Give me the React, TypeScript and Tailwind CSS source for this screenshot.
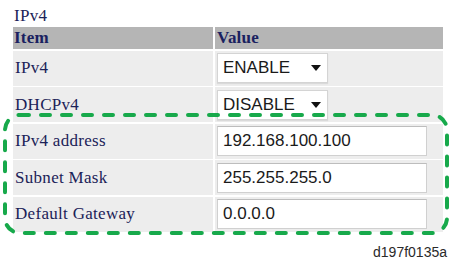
import React from "react";

function Label({ children }: { children: React.ReactNode }) {
  return (
    <div className="h-[35px] bg-[#ededed] flex items-center pl-[2px] font-['Liberation_Serif','Times_New_Roman',serif] text-[17px] tracking-[0.3px] text-[#1b2258]">
      {children}
    </div>
  );
}

function Select({ value }: { value: string }) {
  return (
    <div className="h-[35px] bg-[#ededed] flex items-center pl-[2px]">
      <div className="w-[111px] h-[30px] bg-white border border-[#d4d4d4] shadow-[0_1px_1px_rgba(0,0,0,0.08)] flex items-center justify-between pl-[5px] pr-[6px] font-['Liberation_Sans',Arial,sans-serif] text-[17px] text-[#1a1a1a]">
        <span>{value}</span>
        <svg width="10" height="6" viewBox="0 0 10 6">
          <path d="M0 0 L10 0 L5 6 Z" fill="#111" />
        </svg>
      </div>
    </div>
  );
}

function Input({ value }: { value: string }) {
  return (
    <div className="h-[35px] bg-[#ededed] flex items-center pl-[2px]">
      <div className="w-[210px] h-[30px] bg-white border border-[#d0d0d0] border-t-[#bdbdbd] flex items-center pl-[5px] font-['Liberation_Sans',Arial,sans-serif] text-[17px] text-[#1a1a1a]">
        {value}
      </div>
    </div>
  );
}

export default function App() {
  return (
    <div className="relative w-[451px] h-[265px] bg-white overflow-hidden">
      <div className="h-[27px] pl-[14px] pt-[3px] font-['Liberation_Serif','Times_New_Roman',serif] text-[17px] tracking-[0.3px] text-[#1b2258]">
        IPv4
      </div>
      <div className="ml-[13px] grid grid-cols-[200px_228px] gap-x-[2px] gap-y-[1.5px]">
        <div className="h-[22px] bg-[#b5b5b5] flex items-center pl-[1px] font-['Liberation_Serif','Times_New_Roman',serif] text-[17px] font-bold tracking-[0.2px] text-[#1a2160]">
          Item
        </div>
        <div className="h-[22px] bg-[#b5b5b5] flex items-center pl-[2px] font-['Liberation_Serif','Times_New_Roman',serif] text-[17px] font-bold tracking-[0.2px] text-[#1a2160]">
          Value
        </div>
        <Label>IPv4</Label>
        <Select value="ENABLE" />
        <Label>DHCPv4</Label>
        <Select value="DISABLE" />
        <Label>IPv4 address</Label>
        <Input value="192.168.100.100" />
        <Label>Subnet Mask</Label>
        <Input value="255.255.255.0" />
        <Label>Default Gateway</Label>
        <Input value="0.0.0.0" />
      </div>
      <svg
        className="absolute left-0 top-0 pointer-events-none"
        width="451"
        height="265"
        viewBox="0 0 451 265"
      >
        <rect
          x="5"
          y="115"
          width="442"
          height="118"
          rx="15"
          ry="15"
          fill="none"
          stroke="#17a94b"
          strokeWidth="4"
          strokeDasharray="9 12"
          strokeLinecap="round"
        />
      </svg>
      <div className="absolute right-[4px] bottom-[2px] font-['Liberation_Sans',Arial,sans-serif] text-[14px] text-[#2a2a2a]">
        d197f0135a
      </div>
    </div>
  );
}
